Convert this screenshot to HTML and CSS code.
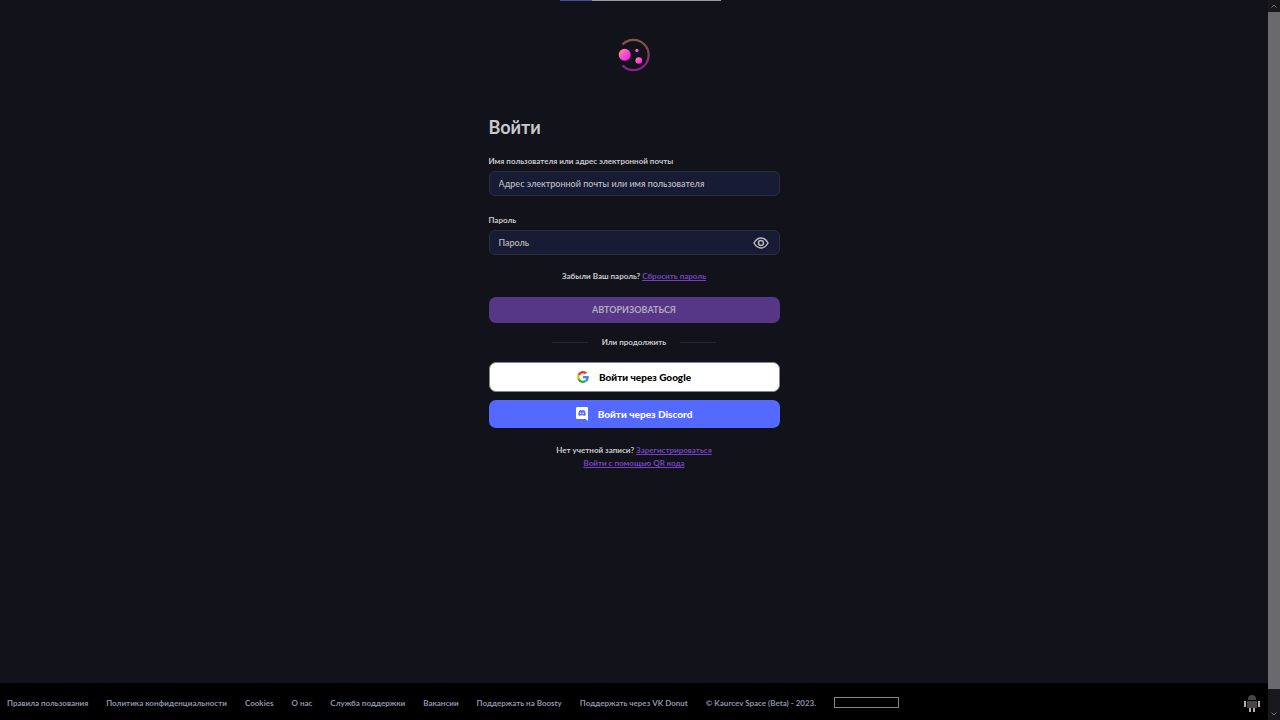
FILE: index.html
```html
<!DOCTYPE html>
<html lang="ru">
<head>
    <meta charset="UTF-8">
    <meta name="viewport" content="width=device-width, initial-scale=1.0">
    <title>Войти</title>
    <link rel="stylesheet" href="styles.css">
</head>
<body>
<div class="page">
    <progress class="load-bar" value="20" max="100" aria-label="Загрузка"></progress>

    <main class="content">
        <svg class="logo" viewBox="0 0 34 34" role="img" aria-label="Kaurcev Space">
            <defs>
                <linearGradient id="ring" x1="0" y1="0" x2="0" y2="1">
                    <stop offset="0" stop-color="#855447"/>
                    <stop offset="1" stop-color="#85208b"/>
                </linearGradient>
                <linearGradient id="planet" x1="0" y1="0" x2="1" y2="1">
                    <stop offset="0" stop-color="#ff9a8b"/>
                    <stop offset=".75" stop-color="#fb29ed"/>
                </linearGradient>
            </defs>
            <path d="M5.500 6.500A15.200 15.200 0 1 1 5.500 27.500" fill="none" stroke="url(#ring)" stroke-width="2.200"/>
            <circle cx="7.700" cy="16.700" r="6" fill="url(#planet)"/>
            <circle cx="20" cy="12.500" r="1.700" fill="url(#planet)"/>
            <circle cx="21.800" cy="22.500" r="3.300" fill="url(#planet)"/>
        </svg>

        <form class="login-form">
            <h1>Войти</h1>

            <div class="field">
                <label for="login">Имя пользователя или адрес электронной почты</label>
                <input type="text" id="login" placeholder="Адрес электронной почты или имя пользователя">
            </div>

            <div class="field">
                <label for="password">Пароль</label>
                <div class="password-box">
                    <input type="password" id="password" placeholder="Пароль">
                    <button type="button" class="eye-btn" aria-label="Показать пароль">
                        <svg viewBox="0 0 16 12">
                            <path d="M1 6C3 2.500 5.300 1 8 1s5 1.500 7 5c-2 3.500-4.300 5-7 5S3 9.500 1 6Z"/>
                            <circle cx="8" cy="6" r="2.500"/>
                        </svg>
                    </button>
                </div>
            </div>

            <p class="forgot">Забыли Ваш пароль? <a href="#">Сбросить пароль</a></p>
            <button type="submit" class="btn btn-login">АВТОРИЗОВАТЬСЯ</button>

            <div class="divider"><span>Или продолжить</span></div>

            <button type="button" class="btn btn-social btn-google">
                <svg viewBox="0 0 48 48">
                    <path fill="#ea4335" d="M24 9.500c3.540 0 6.710 1.220 9.210 3.600l6.850-6.850C35.900 2.380 30.470 0 24 0 14.620 0 6.510 5.380 2.560 13.220l7.980 6.190C12.430 13.720 17.740 9.500 24 9.500z"/>
                    <path fill="#4285f4" d="M46.980 24.550c0-1.570-.15-3.090-.38-4.550H24v9.020h12.940c-.58 2.960-2.260 5.480-4.780 7.180l7.730 6c4.510-4.180 7.090-10.360 7.090-17.650z"/>
                    <path fill="#fbbc05" d="M10.530 28.590A14.500 14.500 0 0 1 9.770 24c0-1.600.27-3.140.76-4.590l-7.980-6.190A23.900 23.900 0 0 0 0 24c0 3.880.92 7.540 2.560 10.780l7.970-6.190z"/>
                    <path fill="#34a853" d="M24 48c6.480 0 11.930-2.130 15.890-5.810l-7.730-6c-2.150 1.450-4.920 2.300-8.160 2.300-6.260 0-11.570-4.220-13.470-9.910l-7.980 6.190C6.510 42.620 14.620 48 24 48z"/>
                </svg>
                Войти через Google
            </button>
            <button type="button" class="btn btn-social btn-discord">
                <svg viewBox="0 0 12 14">
                    <path fill="#ffffff" d="M1.200 0h9.600A1.200 1.200 0 0 1 12 1.200V14l-2.500-2H1.200A1.200 1.200 0 0 1 0 10.800V1.200A1.200 1.200 0 0 1 1.200 0Z"/>
                    <path fill="#5369ff" d="M3.400 3.600Q4.200 3 5 3l.2.300h1.600L7 3q.8 0 1.600.6Q9.700 5.600 9.700 7.900q-.8.900-2 .9l-.4-.6H4.700l-.4.600q-1.200 0-2-.9 0-2.300 1.100-4.300Z"/>
                    <circle cx="4.700" cy="6.300" r=".8" fill="#ffffff"/>
                    <circle cx="7.300" cy="6.300" r=".8" fill="#ffffff"/>
                </svg>
                Войти через Discord
            </button>

            <p class="register">
                Нет учетной записи? <a href="#">Зарегистрироваться</a><br>
                <a href="#">Войти с помощью QR кода</a>
            </p>
        </form>
    </main>

    <footer>
        <nav>
            <a href="#">Правила пользования</a>
            <a href="#">Политика конфиденциальности</a>
            <a href="#">Cookies</a>
            <a href="#">О нас</a>
            <a href="#">Служба поддержки</a>
            <a href="#">Вакансии</a>
            <a href="#">Поддержать на Boosty</a>
            <a href="#">Поддержать через VK Donut</a>
            <span>© Kaurcev Space (Beta) - 2023.</span>
            <span class="counter"></span>
        </nav>
        <svg class="robot" viewBox="0 0 18 20">
            <path fill="#4a4545" d="M5 6a4 4 0 0 1 8 0v1H5ZM4 8h10v7H4Z"/>
            <path fill="#b5b0b0" d="M1 8h2v6H1ZM15 8h2v6h-2ZM6 15h2v4H6ZM10 15h2v4h-2Z"/>
        </svg>
    </footer>
</div>

<div class="scrollbar" aria-hidden="true">
    <svg viewBox="0 0 12 12"><path d="M3.500 7.500 6 5l2.500 2.500"/></svg>
    <div class="thumb"></div>
    <svg class="down" viewBox="0 0 12 12"><path d="M3.500 4.500 6 7l2.500-2.500"/></svg>
</div>
</body>
</html>
```
FILE: styles.css
```css
* {
    box-sizing: border-box;
}

body {
    margin: 0;
    min-height: 100vh;
    display: flex;
    background-color: #11121a;
    color: #c9c9cd;
    font-family: Lato, "Noto Sans", sans-serif;
    font-size: 8px;
    font-weight: 700;
    line-height: 12px;
}

.page {
    flex: 1;
    min-width: 0;
    display: flex;
    flex-direction: column;
    position: relative;
}

.load-bar {
    position: absolute;
    top: 0;
    left: 50%;
    margin-left: -74px;
    width: 161px;
    height: 1px;
    border: 0;
    appearance: none;
    background-color: #999ca1;
}

.load-bar::-webkit-progress-bar {
    background-color: #999ca1;
}

.load-bar::-webkit-progress-value {
    background-color: #4b49a0;
}

.content {
    flex: 1;
    display: flex;
    flex-direction: column;
    align-items: center;
    padding: 38px 16px 24px;
}

.logo {
    width: 34px;
    height: 34px;
    flex: none;
}

.login-form {
    width: 100%;
    max-width: 291px;
    margin-top: 43px;
}

h1 {
    margin: 0 0 16px;
    font-size: 18px;
    line-height: 24px;
}

.field {
    margin-bottom: 18px;
}

.field label {
    display: block;
    margin-bottom: 4px;
}

.field input {
    display: block;
    width: 100%;
    height: 25px;
    padding: 0 9px;
    border: 1px solid #2b2e3c;
    border-radius: 6px;
    background-color: #171b33;
    color: #c9c9cd;
    font: inherit;
    font-size: 9px;
    font-weight: 500;
}

.field input::placeholder {
    color: #c0c0c6;
    opacity: 1;
}

.password-box {
    position: relative;
}

.eye-btn {
    position: absolute;
    top: 7px;
    right: 11px;
    width: 16px;
    height: 12px;
    padding: 0;
    border: 0;
    background: none;
}

.eye-btn svg {
    display: block;
    fill: none;
    stroke: #b9b9c0;
    stroke-width: 1.5;
}

p {
    margin: 0;
    text-align: center;
}

a {
    color: #7443c0;
}

.forgot {
    margin: -3px 0 15px;
}

.btn {
    display: flex;
    align-items: center;
    justify-content: center;
    width: 100%;
    height: 26px;
    padding: 0;
    border: 0;
    border-radius: 7px;
    font: inherit;
    cursor: pointer;
}

.btn-login {
    background-color: #563787;
    color: #b3a9bf;
    font-size: 9px;
}

.divider {
    display: flex;
    align-items: center;
    justify-content: center;
    gap: 14px;
    margin: 13px 0 14px;
}

.divider::before,
.divider::after {
    content: "";
    width: 36px;
    height: 1px;
    background-color: #252633;
}

.btn-social {
    gap: 10px;
    font-size: 10px;
    font-weight: 900;
}

.btn-social svg {
    width: 12px;
    height: 14px;
}

.btn-google {
    height: 30px;
    margin-bottom: 8px;
    border: 1px solid #85868a;
    background-color: #ffffff;
    color: #000000;
}

.btn-discord {
    height: 28px;
    background-color: #5369ff;
    color: #ffffff;
}

.register {
    margin-top: 16px;
    line-height: 13px;
}

footer {
    display: flex;
    align-items: center;
    justify-content: space-between;
    min-height: 37px;
    padding: 2px 7px 0;
    background-color: #000000;
    color: #8e94ad;
}

nav {
    display: flex;
    flex-wrap: wrap;
    align-items: center;
    gap: 4px 18px;
}

nav a {
    color: inherit;
    text-decoration: none;
}

.counter {
    width: 65px;
    height: 11px;
    border: 1px solid #868686;
}

.robot {
    width: 18px;
    height: 20px;
}

.scrollbar {
    display: flex;
    flex-direction: column;
    width: 12px;
    background-color: #17171c;
}

.scrollbar svg {
    flex: none;
    width: 12px;
    height: 12px;
    fill: none;
    stroke: #77777b;
}

.scrollbar .down {
    margin-top: auto;
}

.thumb {
    height: 94%;
    background-color: #6a6a6e;
}
```
